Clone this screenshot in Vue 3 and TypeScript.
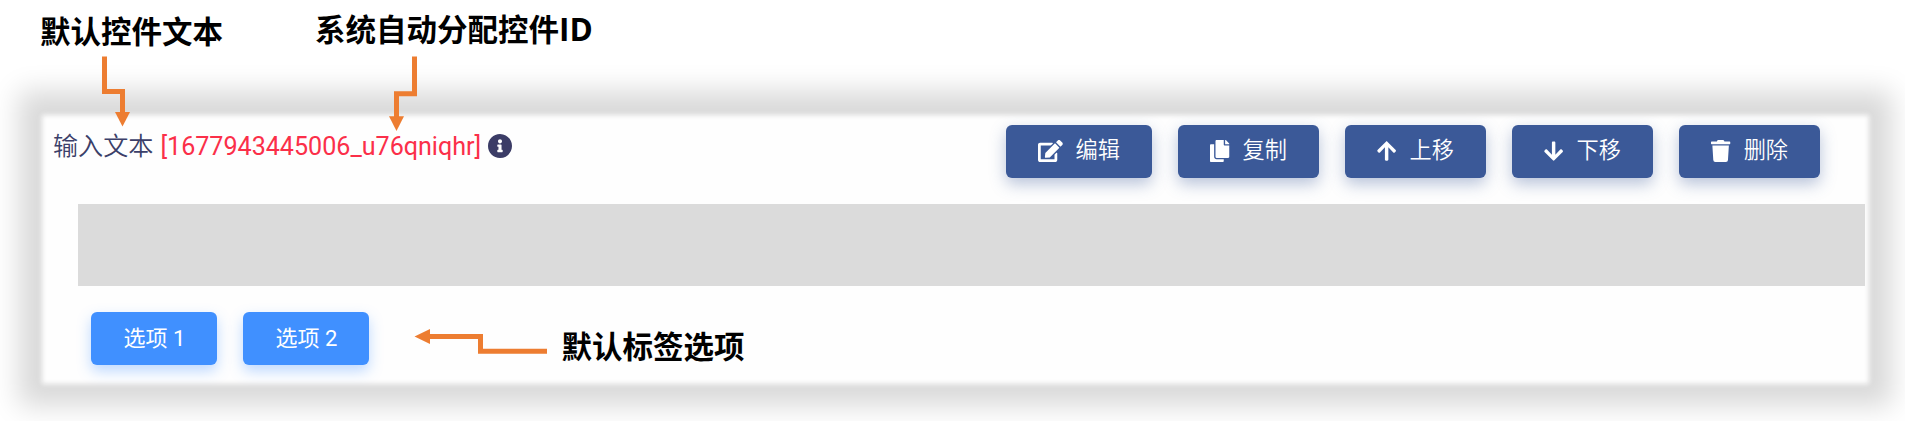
<script setup lang="ts">
interface Action {
  label: string
  width: number
  path: string
  flip?: boolean
}

const arrow =
  'M34.9 289.5l-22.2-22.2c-9.4-9.4-9.4-24.6 0-33.9L207 39c9.4-9.4 24.6-9.4 33.9 0l194.3 194.3c9.4 9.4 9.4 24.6 0 33.9L413 289.4c-9.5 9.5-25 9.3-34.3-.4L264 168.6V456c0 13.3-10.7 24-24 24h-32c-13.3 0-24-10.7-24-24V168.6L69.2 289.1c-9.3 9.8-24.8 10-34.3.4z'

const actions: Action[] = [
  {
    label: '编辑',
    width: 576,
    path: 'M402.6 83.2l90.2 90.2c3.8 3.8 3.8 10 0 13.8L274.4 405.6l-92.8 10.3c-12.4 1.4-22.9-9.1-21.5-21.5l10.3-92.8L388.8 83.2c3.8-3.8 10-3.8 13.8 0zm162-22.9l-48.8-48.8c-15.2-15.2-39.9-15.2-55.2 0l-35.4 35.4c-3.8 3.8-3.8 10 0 13.8l90.2 90.2c3.8 3.8 10 3.8 13.8 0l35.4-35.4c15.2-15.3 15.2-40 0-55.2zM384 346.2V448H64V128h229.8c3.2 0 6.2-1.3 8.5-3.5l40-40c7.6-7.6 2.2-20.5-8.5-20.5H48C21.5 64 0 85.5 0 112v352c0 26.5 21.5 48 48 48h352c26.5 0 48-21.5 48-48V306.2c0-10.7-12.9-16-20.5-8.5l-40 40c-2.2 2.3-3.5 5.3-3.5 8.5z',
  },
  {
    label: '复制',
    width: 448,
    path: 'M320 448v40c0 13.255-10.745 24-24 24H24c-13.255 0-24-10.745-24-24V120c0-13.255 10.745-24 24-24h72v296c0 30.879 25.121 56 56 56h168zm0-344V0H152c-13.255 0-24 10.745-24 24v368c0 13.255 10.745 24 24 24h272c13.255 0 24-10.745 24-24V128H344c-13.2 0-24-10.8-24-24zm120.971-31.029L375.029 7.029A24 24 0 0 0 358.059 0H352v96h96v-6.059a24 24 0 0 0-7.029-16.97z',
  },
  { label: '上移', width: 448, path: arrow },
  { label: '下移', width: 448, path: arrow, flip: true },
  {
    label: '删除',
    width: 448,
    path: 'M432 32H312l-9.4-18.7A24 24 0 0 0 281.1 0H166.8a23.72 23.72 0 0 0-21.4 13.3L136 32H16A16 16 0 0 0 0 48v32a16 16 0 0 0 16 16h416a16 16 0 0 0 16-16V48a16 16 0 0 0-16-16zM53.2 467a48 48 0 0 0 47.9 45h245.8a48 48 0 0 0 47.9-45L416 128H32z',
  },
]

const options: string[] = ['选项 1', '选项 2']
</script>

<template>
  <div class="page">
    <section class="panel">
      <header class="head">
        <div class="title">
          <span class="name">输入文本</span>
          <span class="id">[1677943445006_u76qniqhr]</span>
          <svg class="info" viewBox="8 8 496 496">
            <path d="M256 8C119.043 8 8 119.083 8 256c0 136.997 111.043 248 248 248s248-111.003 248-248C504 119.083 392.957 8 256 8zm0 110c23.196 0 42 18.804 42 42s-18.804 42-42 42-42-18.804-42-42 18.804-42 42-42zm56 254c0 6.627-5.373 12-12 12h-88c-6.627 0-12-5.373-12-12v-24c0-6.627 5.373-12 12-12h12v-64h-12c-6.627 0-12-5.373-12-12v-24c0-6.627 5.373-12 12-12h64c6.627 0 12 5.373 12 12v100h12c6.627 0 12 5.373 12 12v24z" />
          </svg>
        </div>
        <div class="actions">
          <button v-for="a in actions" :key="a.label" class="btn action" type="button">
            <svg class="icon" :class="{ flip: a.flip }" :viewBox="`0 0 ${a.width} 512`">
              <path :d="a.path" />
            </svg>
            <span>{{ a.label }}</span>
          </button>
        </div>
      </header>
      <div class="field"></div>
      <div class="options">
        <button v-for="o in options" :key="o" class="btn option" type="button">{{ o }}</button>
      </div>
    </section>

    <span class="note note-text">默认控件文本</span>
    <span class="note note-id">系统自动分配控件<span class="latin">ID</span></span>
    <span class="note note-options">默认标签选项</span>
    <svg class="connectors" viewBox="0 0 1905 421">
      <path class="line" d="M104.5 56.5V91.5H122.5V114" />
      <path class="tip" d="M115 112H130L122.5 126.5Z" />
      <path class="line" d="M414.5 56.5V93.8H396.5V118" />
      <path class="tip" d="M389 116.2H404L396.5 131Z" />
      <path class="line" d="M547 351.2H480.5V336.5H428" />
      <path class="tip" d="M430 329V344L414.5 336.5Z" />
    </svg>
  </div>
</template>

<style>
body {
  margin: 0;
  background: #fff;
}
</style>

<style scoped>
.page {
  position: relative;
  width: 1905px;
  height: 421px;
  overflow: hidden;
  box-sizing: border-box;
  padding: 115px 36px 37px 42px;
  font-family: Roboto, 'Noto Sans CJK SC', sans-serif;
}

.panel {
  height: 269px;
  box-sizing: border-box;
  background: #fefefe;
  box-shadow:
    inset 0 0 5px #d9d9d9,
    0 0 5px #fefefe,
    0 -1px 26px 23px #d9d9d9;
}

.head {
  display: flex;
  justify-content: space-between;
  align-items: flex-start;
  height: 89px;
  box-sizing: border-box;
  padding: 10px 49px 0 11px;
}

.title {
  display: flex;
  align-items: center;
  height: 42px;
  font-size: 25.1px;
  line-height: 42px;
  white-space: nowrap;
}

.name {
  padding-top: 1px;
  font-weight: 350;
  color: #3b3f69;
}

.id {
  margin-left: 7px;
  padding-top: 1px;
  color: #fb2f49;
}

.info {
  width: 24px;
  height: 24px;
  margin-left: 7px;
  fill: #3b3c66;
}

.actions {
  display: flex;
  gap: 26.4px;
}

.btn {
  display: flex;
  align-items: center;
  justify-content: center;
  height: 53px;
  box-sizing: border-box;
  padding: 0 32px;
  border: 0;
  border-radius: 6px;
  color: #fff;
  font: 400 22px/51px Roboto, 'Noto Sans CJK SC', sans-serif;
  white-space: nowrap;
}

.btn span {
  height: 53px;
}

.action {
  gap: 13px;
  font-size: 22.2px;
  font-weight: 350;
  background: #3b5998;
  box-shadow: 0 6px 16px rgba(59, 89, 152, 0.36);
}

.icon {
  height: 22px;
  margin-top: -1px;
  fill: #fff;
}

.flip {
  transform: scaleY(-1);
}

.field {
  height: 82px;
  margin: 0 4px 0 36px;
  background: #dbdbdb;
}

.options {
  display: flex;
  gap: 26px;
  padding: 26.4px 0 0 49.4px;
}

.option {
  width: 126px;
  padding: 0 0 1px;
  background: #4090ff;
  box-shadow: 0 6px 14px rgba(64, 144, 255, 0.34);
}

.note {
  position: absolute;
  color: #000;
  font: 700 30.5px/44px 'Open Sans', 'Noto Sans CJK SC', sans-serif;
  white-space: nowrap;
}

.latin {
  font-size: 31.5px;
  line-height: 1;
}

.note-text {
  left: 40px;
  top: 9px;
}

.note-id {
  left: 315px;
  top: 7px;
}

.note-options {
  left: 561.5px;
  top: 324px;
}

.connectors {
  position: absolute;
  inset: 0;
  width: 1905px;
  height: 421px;
  pointer-events: none;
}

.line {
  fill: none;
  stroke: #ed7d31;
  stroke-width: 5;
}

.tip {
  fill: #ed7d31;
}
</style>
